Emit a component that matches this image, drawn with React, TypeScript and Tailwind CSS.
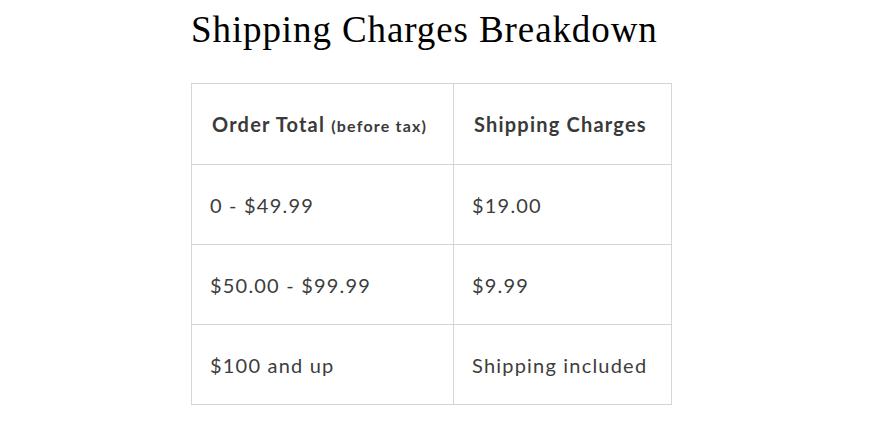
const rows = [
  ["0 - $49.99", "$19.00"],
  ["$50.00 - $99.99", "$9.99"],
  ["$100 and up", "Shipping included"],
];

export default function App() {
  return (
    <div className="min-h-screen bg-white pl-[191px] pt-[6px]">
      <h1 className="font-['Liberation_Serif',serif] text-[37px] leading-[48px] tracking-[0.9px] text-black">
        Shipping Charges Breakdown
      </h1>
      <table className="mt-[29px] w-[481px] border-collapse font-['Lato',sans-serif] text-[20px] tracking-[1.2px] text-[#3d3d3d]">
        <thead>
          <tr className="h-[81px]">
            <th className="w-[262px] border border-[#d6d6d6] px-[20px] text-left font-bold text-[#3a3a3a]">
              Order Total <span className="text-[16px]">(before tax)</span>
            </th>
            <th className="border border-[#d6d6d6] px-[20px] text-left font-bold text-[#3a3a3a]">
              Shipping Charges
            </th>
          </tr>
        </thead>
        <tbody>
          {rows.map(([a, b]) => (
            <tr key={a} className="h-[80px]">
              <td className="border border-[#d6d6d6] px-[18px]">{a}</td>
              <td className="border border-[#d6d6d6] px-[18px]">{b}</td>
            </tr>
          ))}
        </tbody>
      </table>
    </div>
  );
}
